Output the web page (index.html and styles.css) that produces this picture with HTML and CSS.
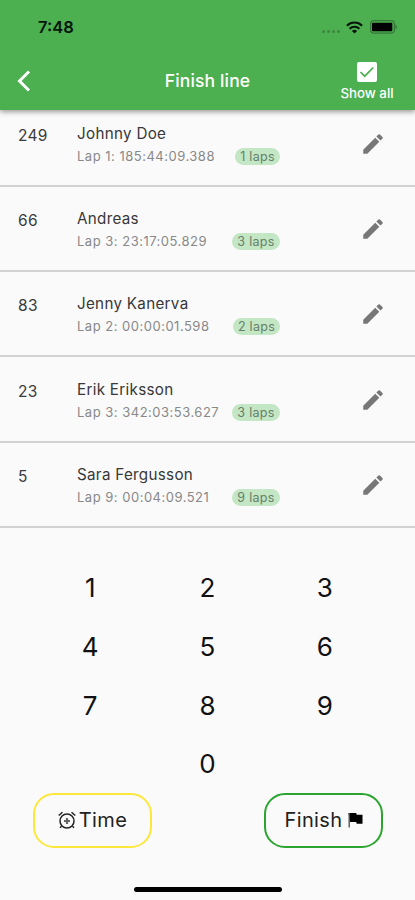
FILE: index.html
```html
<!DOCTYPE html>
<html lang="en">
<head>
<meta charset="utf-8">
<meta name="viewport" content="width=device-width">
<title>Finish line</title>
<link rel="stylesheet" href="styles.css">
</head>
<body>
<svg width="0" height="0" class="sprite">
  <symbol id="pencil" viewBox="0 0 24 24"><path d="M3 17.25V21h3.75L17.81 9.94l-3.75-3.75L3 17.25zM20.71 7.04a1 1 0 0 0 0-1.41l-2.34-2.34a1 1 0 0 0-1.41 0l-1.83 1.83 3.75 3.75 1.83-1.83z"/></symbol>
</svg>
<header class="top">
  <div class="status">
    <span class="clock">7:48</span>
    <span class="signal"><i></i><i></i><i></i><i></i></span>
    <svg class="wifi" viewBox="0 0 17 13"><g fill="none" stroke="#07150a" stroke-width="2.1"><path d="M.9 4.7a10.8 10.8 0 0 1 15.2 0"/><path d="M3.6 7.7a7 7 0 0 1 9.8 0"/></g><path d="M8.5 12.6 5.9 10a3.7 3.7 0 0 1 5.2 0z" fill="#07150a"/></svg>
    <svg class="battery" viewBox="0 0 27 14"><rect x=".6" y=".6" width="23.8" height="12.6" rx="3.5" fill="none" stroke="#35783a" stroke-width="1.2"/><rect x="2" y="2.8" width="20.3" height="8.4" rx="1" fill="#000"/><path d="M25.400 4.500v5a2.800 2.800 0 0 0 0-5" fill="#35783a"/></svg>
  </div>
  <div class="bar">
    <svg class="back" viewBox="0 0 14 22"><path d="M12 1.500 2.500 11l9.500 9.500" fill="none" stroke="#fff" stroke-width="3"/></svg>
    <h1>Finish line</h1>
    <div class="show">
      <svg viewBox="0 0 20 20"><rect width="20" height="20" rx="2" fill="#fff"/><path d="m3.500 10 4.200 4.200 8.600-8.700" fill="none" stroke="#4caf50" stroke-width="1.700"/></svg>
      <span>Show all</span>
    </div>
  </div>
</header>
<main class="list">
  <div class="row"><span class="num">249</span><div class="info"><div class="name">Johnny Doe</div><div class="detail"><span class="lap">Lap 1: 185:44:09.388</span><span class="chip one">1 laps</span></div></div><svg class="edit"><use href="#pencil"/></svg></div>
  <div class="row"><span class="num">66</span><div class="info"><div class="name">Andreas</div><div class="detail"><span class="lap">Lap 3: 23:17:05.829</span><span class="chip">3 laps</span></div></div><svg class="edit"><use href="#pencil"/></svg></div>
  <div class="row"><span class="num">83</span><div class="info"><div class="name">Jenny Kanerva</div><div class="detail"><span class="lap">Lap 2: 00:00:01.598</span><span class="chip two">2 laps</span></div></div><svg class="edit"><use href="#pencil"/></svg></div>
  <div class="row"><span class="num">23</span><div class="info"><div class="name">Erik Eriksson</div><div class="detail"><span class="lap">Lap 3: 342:03:53.627</span><span class="chip">3 laps</span></div></div><svg class="edit"><use href="#pencil"/></svg></div>
  <div class="row"><span class="num">5</span><div class="info"><div class="name">Sara Fergusson</div><div class="detail"><span class="lap">Lap 9: 00:04:09.521</span><span class="chip">9 laps</span></div></div><svg class="edit"><use href="#pencil"/></svg></div>
</main>
<section class="pad">
  <span>1</span><span>2</span><span>3</span>
  <span>4</span><span>5</span><span>6</span>
  <span>7</span><span>8</span><span>9</span>
  <span class="zero">0</span>
</section>
<footer class="actions">
  <button class="time"><svg viewBox="0 0 18 18"><g fill="none" stroke="#222" stroke-width="1.500"><circle cx="9" cy="10" r="7"/><path d="M.7 4.500 4.500 1.200M17.300 4.500 13.500 1.200M3.500 15.200l-1.500 1.500M14.500 15.200l1.500 1.500"/><path d="M9 7v6M6 10h6" stroke-width="2.200" stroke="#666"/></g></svg><span>Time</span></button>
  <button class="finish"><span>Finish</span><svg viewBox="0 0 15 16"><path d="M.5 1h7.700l.5 1.700h5.800v9H8.700l-.5-1.800H2" fill="#000"/><path d="M1.200 1v14.500" stroke="#555" stroke-width="1.400"/></svg></button>
</footer>
<div class="home"></div>
</body>
</html>
```
FILE: styles.css
```css
* { box-sizing: border-box; }
body { margin: 0; width: 415px; height: 900px; overflow: hidden; display: flex; flex-direction: column; background: #fafafa; font-family: Inter, "Liberation Sans", sans-serif; color: #222; }
.sprite { position: absolute; }
.top { height: 110px; flex: none; background: #4caf50; box-shadow: 0 2px 5px rgba(0,0,0,.38); position: relative; z-index: 1; }
.status { height: 52px; display: flex; align-items: center; padding: 2px 18px 0 38px; }
.clock { font-size: 16.500px; font-weight: 600; color: #07150a; margin-right: auto; }
.signal { display: flex; gap: 2px; margin: 9px 6px 0 0; }
.signal i { width: 3px; height: 3px; border-radius: 50%; background: #3b853e; }
.wifi { width: 17px; height: 13px; margin-right: 7px; }
.battery { width: 27px; height: 14px; }
.bar { height: 58px; display: grid; grid-template-columns: 110px 1fr 110px; align-items: center; color: #fff; }
.back { width: 14px; height: 22px; margin: -1px 0 0 17px; }
h1 { margin: -2px 0 0; text-align: center; font-size: 17.500px; font-weight: 500; letter-spacing: .15px; }
.show { display: flex; flex-direction: column; align-items: center; margin-left: 14px; gap: 2px; font-size: 13.300px; font-weight: 500; line-height: 18px; }
.show svg { width: 20px; height: 20px; margin-top: 1px; }
.list { flex: none; margin-top: -8.900px; }
.row { height: 85.400px; border-bottom: 2px solid #d2d2d2; display: flex; padding: 22.500px 32px 0 18px; }
.num { width: 59px; font-size: 15.500px; line-height: 22px; letter-spacing: .3px; padding-top: 1px; color: #3c3c3c; }
.info { flex: 1; }
.name { font-size: 15.200px; line-height: 20px; letter-spacing: .3px; color: #383838; }
.detail { width: 203px; height: 24px; display: flex; align-items: center; justify-content: space-between; font-size: 13px; letter-spacing: .5px; color: #898989; white-space: nowrap; }
.chip { width: 48px; height: 17px; line-height: 17px; border-radius: 9px; background: #c3e6c4; color: #66806a; font-size: 12.500px; letter-spacing: .3px; text-align: center; margin-top: 1px; }
.one { width: 45px; }
.two { width: 47px; }
.edit { width: 26px; height: 26px; fill: #777; margin: 7px -3px 0 0; }
.pad { margin-top: 31.400px; flex: none; display: grid; grid-template-columns: repeat(3, 117.300px); grid-auto-rows: 58.600px; justify-content: center; text-align: center; line-height: 58.600px; font-size: 26px; color: #111; }
.zero { grid-column: 2; }
.actions { flex: none; display: flex; justify-content: space-between; padding: 0 32px 0 33px; margin-top: -1px; }
button { height: 55px; width: 119px; padding: 0; border: 2.500px solid; border-radius: 21px; background: transparent; display: flex; align-items: center; justify-content: center; font-family: inherit; font-size: 20px; letter-spacing: .4px; color: #222; }
.time { border-color: #fce83a; }
.finish { border-color: #2ba52f; }
.time svg { width: 18px; height: 18px; margin-right: 3px; }
.finish svg { width: 15px; height: 16px; margin-left: 5px; }
.home { width: 148px; height: 5px; border-radius: 3px; background: #000; margin: 39px auto 0; flex: none; }
```
